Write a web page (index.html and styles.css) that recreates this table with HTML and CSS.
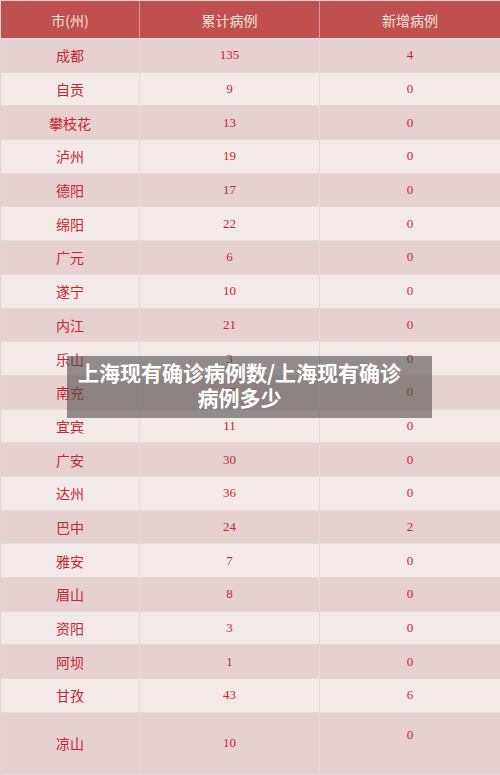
FILE: index.html
```html
<!DOCTYPE html>
<html lang="zh">
<head>
<meta charset="utf-8">
<title>四川疫情数据</title>
<link rel="stylesheet" href="styles.css">
</head>
<body>
<div class="page">
  <table class="data">
    <colgroup><col class="c1"><col class="c2"><col class="c3"></colgroup>
    <thead>
      <tr class="head"><th>市(州)</th><th>累计病例</th><th>新增病例</th></tr>
    </thead>
    <tbody>
      <tr class="odd"><td class="city">成都</td><td>135</td><td>4</td></tr>
      <tr class="even"><td class="city">自贡</td><td>9</td><td>0</td></tr>
      <tr class="odd"><td class="city">攀枝花</td><td>13</td><td>0</td></tr>
      <tr class="even"><td class="city">泸州</td><td>19</td><td>0</td></tr>
      <tr class="odd"><td class="city">德阳</td><td>17</td><td>0</td></tr>
      <tr class="even"><td class="city">绵阳</td><td>22</td><td>0</td></tr>
      <tr class="odd"><td class="city">广元</td><td>6</td><td>0</td></tr>
      <tr class="even"><td class="city">遂宁</td><td>10</td><td>0</td></tr>
      <tr class="odd"><td class="city">内江</td><td>21</td><td>0</td></tr>
      <tr class="even"><td class="city">乐山</td><td>3</td><td>0</td></tr>
      <tr class="odd"><td class="city">南充</td><td>37</td><td>0</td></tr>
      <tr class="even"><td class="city">宜宾</td><td>11</td><td>0</td></tr>
      <tr class="odd"><td class="city">广安</td><td>30</td><td>0</td></tr>
      <tr class="even"><td class="city">达州</td><td>36</td><td>0</td></tr>
      <tr class="odd"><td class="city">巴中</td><td>24</td><td>2</td></tr>
      <tr class="even"><td class="city">雅安</td><td>7</td><td>0</td></tr>
      <tr class="odd"><td class="city">眉山</td><td>8</td><td>0</td></tr>
      <tr class="even"><td class="city">资阳</td><td>3</td><td>0</td></tr>
      <tr class="odd"><td class="city">阿坝</td><td>1</td><td>0</td></tr>
      <tr class="even"><td class="city">甘孜</td><td>43</td><td>6</td></tr>
      <tr class="odd last"><td class="city">凉山</td><td>10</td><td class="two">0<br>&nbsp;</td></tr>
    </tbody>
  </table>
  <div class="caption">上海现有确诊病例数/上海现有确诊<br>病例多少</div>
</div>
</body>
</html>
```
FILE: styles.css
```css
html, body {
  margin: 0;
  padding: 0;
  background: #ffffff;
}
.page {
  position: relative;
  width: 500px;
  height: 775px;
  overflow: hidden;
}
.data {
  width: 500px;
  border-collapse: separate;
  border-spacing: 0;
  table-layout: fixed;
  border-top: 1px solid #ddd6d6;
  border-left: 1px solid #ddd6d6;
  font-family: "Liberation Serif", "Noto Sans CJK SC", serif;
  font-size: 13px;
  color: #c3272d;
}
.c1 { width: 139px; }
.c2 { width: 180px; }
.c3 { width: 181px; }
.data th, .data td {
  padding: 0;
  text-align: center;
  vertical-align: middle;
  border-right: 1.5px solid #e2dcdc;
  border-bottom: 1.5px solid #e2dcdc;
  line-height: 16px;
}
.head {
  height: 38px;
  background: #c0504d;
}
.head th {
  font-family: "Noto Sans CJK SC", sans-serif;
  font-weight: normal;
  color: #f6e0df;
  font-size: 14px;
  border-right-color: #d79a98;
}
.data tbody tr { height: 33.7px; }
.odd { background: #e7d0d0; }
.even { background: #f3e9e9; }
.city {
  font-family: "Noto Sans CJK SC", sans-serif;
  font-size: 14px;
  color: #c3272d;
}
.data tbody tr.last { height: 62px; }
.two { line-height: 26px; }
.caption {
  position: absolute;
  left: 67px;
  top: 356px;
  width: 365px;
  height: 62px;
  box-sizing: border-box;
  padding: 4px 26px 0 6px;
  background: rgba(85, 80, 80, 0.62);
  color: #ffffff;
  font-family: "Noto Sans CJK SC", sans-serif;
  font-weight: bold;
  font-size: 21px;
  line-height: 25px;
  text-align: center;
  white-space: nowrap;
}
```
